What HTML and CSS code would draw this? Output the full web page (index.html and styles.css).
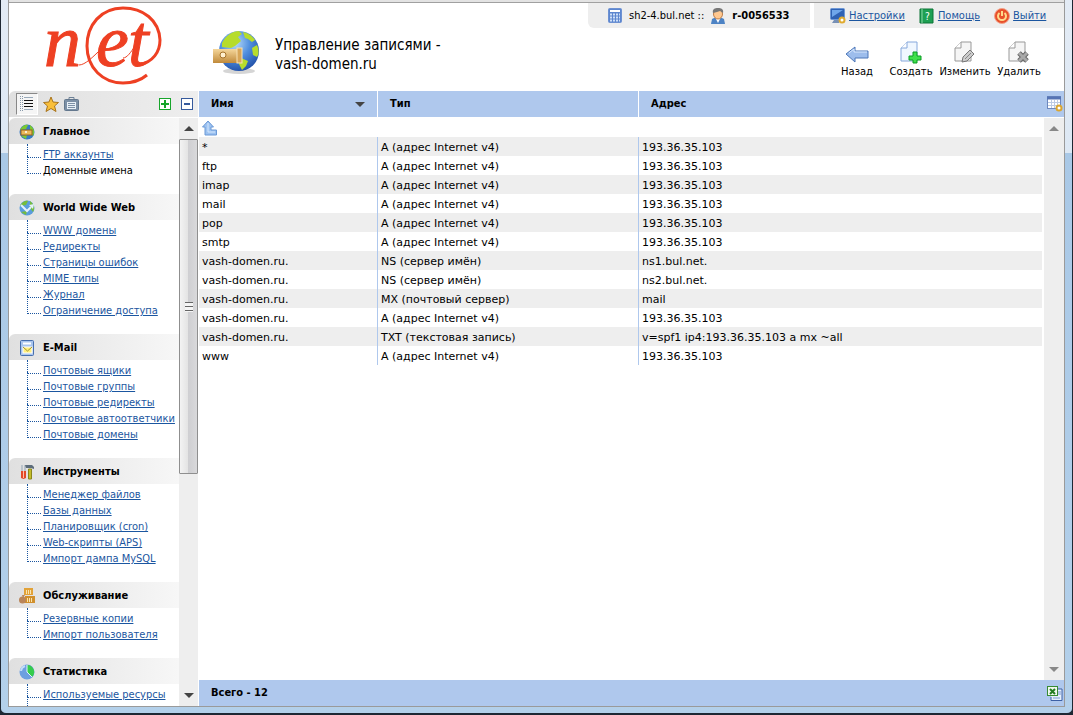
FILE: index.html
```html
<!DOCTYPE html>
<html lang="ru">
<head>
  <meta charset="UTF-8">
  <meta name="viewport" content="width=device-width, initial-scale=1.0">
  <title>Управление записями - vash-domen.ru</title>
  <link rel="stylesheet" href="styles.css">
</head>
<body>
<div class="window">
<div class="page">

  <header class="header">
    <a class="logo" href="#" aria-label="net">
      <svg width="120" height="80" viewBox="0 0 120 80">
        <text y="60" x="1 53 85">net</text>
        <path class="hair" d="M36 59C42 59 50 51 58 43M80 52C84 52 88 46 92 40"/>
        <path d="M96 59C110 56 117 46 117 34C116 14 100 2 80 2C58 2 44 19 44 40C44 62 60 77 80 77C90 77 98 74 104 69"/>
      </svg>
    </a>
    <div class="title">
      <svg width="46" height="44" viewBox="0 0 46 44">
        <defs>
          <radialGradient id="sea" cx=".4" cy=".3" r=".75"><stop offset="0" stop-color="#b9dcfb"/><stop offset=".5" stop-color="#4f8ede"/><stop offset="1" stop-color="#1f4ea6"/></radialGradient>
          <linearGradient id="wood" x2="0" y2="1"><stop offset="0" stop-color="#f5d79b"/><stop offset="1" stop-color="#c08a3a"/></linearGradient>
        </defs>
        <ellipse cx="26" cy="41" rx="16" ry="3" fill="#d5d5d5"/>
        <circle cx="26" cy="21" r="20" fill="url(#sea)"/>
        <path d="M9 13C13 5 20 1 26 1L29 4L25 7L28 11L22 16L18 18L9 17ZM30 2C36 3 40 7 42 10L39 12L35 9L32 8ZM39 18L44 15C46 20 46 24 44 27L40 25ZM28 28L35 31L33 36L29 40L26 34Z" fill="#b6dc2c"/>
        <rect x="0" y="19" width="25" height="14" fill="url(#wood)"/>
        <rect x="24" y="18" width="5" height="15" fill="#d8a658" stroke="#f8e2b4"/>
        <circle cx="10" cy="25" r="3" fill="#fff0cf" stroke="#a6732b"/>
      </svg>
      <h1>Управление записями -<br>vash-domen.ru</h1>
    </div>
    <div class="header-right">
      <div class="topbar">
        <div class="session">
          <svg width="14" height="16" viewBox="0 0 14 16"><rect x=".5" y=".5" width="13" height="14" rx="1" fill="#5c86cf" stroke="#6d91d2"/><path d="M2 3H12" stroke="#fff" stroke-width="2"/><path d="M2 6.500H12M2 9.500H12M2 12.500H12" stroke="#cfe0f8" stroke-width="2" stroke-dasharray="2 1"/></svg>
          <span>sh2-4.bul.net ::</span>
          <svg width="14" height="16" viewBox="0 0 14 16"><path d="M0 16L1 11L5 9H9L13 11L14 16Z" fill="#4d83c4"/><path d="M4 9L7 15L10 9Z" fill="#fff"/><ellipse cx="7" cy="6" rx="4.500" ry="5" fill="#ffc890" stroke="#bd7c46"/><path d="M2 5C1 1 4 0 7 0S13 1 12 5L9 3L6 4Z" fill="#777"/></svg>
          <b>r-0056533</b>
        </div>
        <nav class="links">
          <a href="#"><svg width="16" height="16" viewBox="0 0 16 16"><rect x=".5" y=".5" width="14" height="11" rx="1" fill="#2f62b4" stroke="#6d97d5"/><path d="M2 2H13L2 9Z" fill="#6fa6ea"/><path d="M4 12H9V15H2Z" fill="#7790b5"/><circle cx="12" cy="12" r="2.500" fill="#fff" stroke="#e0ab2f" stroke-width="2"/></svg><span>Настройки</span></a>
          <a href="#"><svg width="16" height="16" viewBox="0 0 16 16"><path d="M1 1H14V15H1Z" fill="#1fa053" stroke="#0d7436"/><path d="M3 1V15" stroke="#8ed9a8"/><text x="6" y="12" font-size="10" fill="#fff">?</text></svg><span>Помощь</span></a>
          <a href="#"><svg width="16" height="16" viewBox="0 0 16 16"><circle cx="8" cy="8" r="7.500" fill="#e8502b" stroke="#f2a28a"/><path d="M5.500 5A4 4 0 1 0 10.500 5M8 3V8" fill="none" stroke="#ffd98c" stroke-width="2"/></svg><span>Выйти</span></a>
        </nav>
      </div>
      <div class="actions">
        <button><svg width="24" height="24" viewBox="0 0 24 24"><path d="M1 13L10 6V10H23V17H10V21Z" fill="#9dbdec" stroke="#4c76b8"/><path d="M4 12L9 8V11H22" fill="none" stroke="#d9e8fc"/></svg>Назад</button>
        <button><svg width="24" height="24" viewBox="0 0 24 24"><path d="M8 1H18V20H2V7Z" fill="#f0f7ff" stroke="#86a8dc"/><path d="M8 1V7H2" fill="#fff" stroke="#86a8dc"/><path d="M14 11H18V15H22V19H18V22H14V19H10V15H14Z" fill="#3fe04c" stroke="#0b9c25"/></svg>Создать</button>
        <button><svg width="24" height="24" viewBox="0 0 24 24"><path d="M8 1H18V20H2V7Z" fill="#f5f5f5" stroke="#999"/><path d="M8 1V7H2" fill="#fff" stroke="#999"/><path d="M9 21L10 16L17 9L21 13L14 20Z" fill="#ccc" stroke="#777"/><path d="M12 18L18 12" stroke="#888"/></svg>Изменить</button>
        <button><svg width="24" height="24" viewBox="0 0 24 24"><path d="M8 1H18V20H2V7Z" fill="#f5f5f5" stroke="#999"/><path d="M8 1V7H2" fill="#fff" stroke="#999"/><path d="M12 12L20 20M20 12L12 20" stroke="#666" stroke-width="5"/><path d="M12 12L20 20M20 12L12 20" stroke="#a9a9a9" stroke-width="3"/></svg>Удалить</button>
      </div>
    </div>
  </header>

  <div class="main">
    <aside class="sidebar">
      <div class="tools">
        <button class="active" aria-label="Список"><svg width="16" height="16" viewBox="0 0 16 16"><path d="M1.500 0V16M3.500 0V16" stroke="#89a" stroke-dasharray="1 1"/><path d="M5 1.500H14M5 13.500H14" stroke="#9ab"/><path d="M5 4.500H14M5 7.500H14M5 10.500H14" stroke="#111"/></svg></button>
        <button aria-label="Избранное"><svg width="16" height="16" viewBox="0 0 16 16"><path d="M8 1L10 6L15.500 6.500L11.500 10L13 15.500L8 12.500L3 15.500L4.500 10L.5 6.500L6 6Z" fill="#f9bf3a" stroke="#a8741c"/></svg></button>
        <button aria-label="Инструменты"><svg width="16" height="16" viewBox="0 0 16 16"><path d="M5 4V1.500H10V4" fill="none" stroke="#6e8196"/><rect x=".5" y="3.500" width="14" height="11" rx="1" fill="#7c90a6" stroke="#64788e"/><rect x="3" y="6" width="9" height="7" fill="#e8f0f7"/><path d="M4 7.500H11M4 9.500H11M4 11.500H11" stroke="#7c90a6"/></svg></button>
        <button class="expand" aria-label="Развернуть"><svg width="12" height="12" viewBox="0 0 12 12"><rect x=".5" y=".5" width="11" height="11" fill="#fff" stroke="#17a52b"/><path d="M2 6H10M6 2V10" stroke="#17a52b" stroke-width="2"/></svg></button>
        <button aria-label="Свернуть"><svg width="12" height="12" viewBox="0 0 12 12"><rect x=".5" y=".5" width="11" height="11" fill="#fff" stroke="#365a9c"/><path d="M3 6H9" stroke="#365a9c" stroke-width="2"/></svg></button>
      </div>
      <div class="menu-wrap">
        <nav class="menu">
          <h2><svg width="16" height="16" viewBox="0 0 16 16"><circle cx="8" cy="8" r="7.500" fill="#377cc6"/><path d="M1 6C3 1 8 0 9 1L7 5ZM11 1C15 4 16 8 14 12L11 8ZM2 12L8 11L7 15Z" fill="#7bc92f"/><rect x="2" y="6" width="11" height="5" fill="#eab95b" stroke="#98641f"/><circle cx="7" cy="8" r="1" fill="#fff"/></svg>Главное</h2>
          <ul>
            <li><a href="#">FTP аккаунты</a></li>
            <li><span>Доменные имена</span></li>
          </ul>
          <h2><svg width="16" height="16" viewBox="0 0 16 16"><circle cx="8" cy="8" r="7.500" fill="#5a9ddd"/><path d="M1 6C3 1 8 0 9 1L7 5ZM11 1C15 4 16 8 14 12L11 8ZM2 12L8 11L7 15Z" fill="#76bd3b"/><path d="M2 5L8 11L12 7" fill="none" stroke="#e4f1fb" stroke-width="2"/><path d="M10 5L15 4L14 9Z" fill="#e4f1fb"/></svg>World Wide Web</h2>
          <ul>
            <li><a href="#">WWW домены</a></li>
            <li><a href="#">Редиректы</a></li>
            <li><a href="#">Страницы ошибок</a></li>
            <li><a href="#">MIME типы</a></li>
            <li><a href="#">Журнал</a></li>
            <li><a href="#">Ограничение доступа</a></li>
          </ul>
          <h2><svg width="16" height="16" viewBox="0 0 16 16"><rect x="1.500" y=".5" width="13" height="15" rx="1" fill="#a9c5ee" stroke="#476fae"/><path d="M4 3.500H12" stroke="#fff" stroke-width="2"/><rect x="4" y="7" width="9" height="6" fill="#ffef7c" stroke="#fff"/><path d="M4 7L8.500 11L13 7" fill="none" stroke="#a5942e"/></svg>E-Mail</h2>
          <ul>
            <li><a href="#">Почтовые ящики</a></li>
            <li><a href="#">Почтовые группы</a></li>
            <li><a href="#">Почтовые редиректы</a></li>
            <li><a href="#">Почтовые автоответчики</a></li>
            <li><a href="#">Почтовые домены</a></li>
          </ul>
          <h2><svg width="16" height="16" viewBox="0 0 16 16"><path d="M3 1V7M6 1V7" stroke="#93a5b5"/><path d="M2 7H7V14L4.500 15L2 14Z" fill="#e34928"/><path d="M4.500 7V14" stroke="#ffc0a8"/><path d="M6 1H13L15 3V5L12 4H7Z" fill="#5d6d7b"/><path d="M9.500 5H12.500V15H9.500Z" fill="#c4bd2a" stroke="#8b861b"/></svg>Инструменты</h2>
          <ul>
            <li><a href="#">Менеджер файлов</a></li>
            <li><a href="#">Базы данных</a></li>
            <li><a href="#">Планировщик (cron)</a></li>
            <li><a href="#">Web-скрипты (APS)</a></li>
            <li><a href="#">Импорт дампа MySQL</a></li>
          </ul>
          <h2><svg width="16" height="16" viewBox="0 0 16 16"><rect x="5" y="0" width="9" height="7" fill="#e2a238"/><rect x="6" y="8" width="10" height="7" fill="#d18f2c"/><path d="M7.500 2V6M9.500 2V6M11.500 2V6M8.500 10V14M10.500 10V14M12.500 10V14" stroke="#fbe5ae"/><circle cx="3.500" cy="12" r="3.500" fill="#b9855a"/><path d="M3 7H6L4 10Z" fill="#b9855a"/></svg>Обслуживание</h2>
          <ul>
            <li><a href="#">Резервные копии</a></li>
            <li><a href="#">Импорт пользователя</a></li>
          </ul>
          <h2><svg width="16" height="16" viewBox="0 0 16 16"><circle cx="8" cy="8" r="7.500" fill="#6c9fe0"/><path d="M8 1A7 7 0 0 1 13 13L8 8Z" fill="#35cc4d"/><path d="M8 1V8L13 13" fill="none" stroke="#e5f3ff"/><path d="M2 7A6 6 0 0 1 6 2" stroke="#c2dcf8" stroke-width="2" fill="none"/></svg>Статистика</h2>
          <ul class="continued">
            <li><a href="#">Используемые ресурсы</a></li>
          </ul>
        </nav>
        <div class="scroll">
          <button class="arrow up" aria-label="Вверх"></button>
          <div class="thumb"><i></i></div>
          <button class="arrow down" aria-label="Вниз"></button>
        </div>
      </div>
    </aside>

    <section class="content">
      <div class="list">
        <table class="records">
          <thead>
            <tr>
              <th class="col-name">Имя<i class="sort"></i></th>
              <th class="col-type">Тип</th>
              <th>Адрес</th>
            </tr>
          </thead>
          <tbody>
            <tr class="level-up"><td colspan="3"><a href="#" aria-label="На уровень вверх"><svg width="16" height="16" viewBox="0 0 16 16"><path d="M6 1L11.500 7H9V10H14.500V15H3V7H.5Z" fill="#9cc2f1" stroke="#6b99d6"/><path d="M6 3V12H13" fill="none" stroke="#d5e7fc"/></svg></a></td></tr>
            <tr><td>*</td><td>A (адрес Internet v4)</td><td>193.36.35.103</td></tr>
            <tr><td>ftp</td><td>A (адрес Internet v4)</td><td>193.36.35.103</td></tr>
            <tr><td>imap</td><td>A (адрес Internet v4)</td><td>193.36.35.103</td></tr>
            <tr><td>mail</td><td>A (адрес Internet v4)</td><td>193.36.35.103</td></tr>
            <tr><td>pop</td><td>A (адрес Internet v4)</td><td>193.36.35.103</td></tr>
            <tr><td>smtp</td><td>A (адрес Internet v4)</td><td>193.36.35.103</td></tr>
            <tr><td>vash-domen.ru.</td><td>NS (сервер имён)</td><td>ns1.bul.net.</td></tr>
            <tr><td>vash-domen.ru.</td><td>NS (сервер имён)</td><td>ns2.bul.net.</td></tr>
            <tr><td>vash-domen.ru.</td><td>MX (почтовый сервер)</td><td>mail</td></tr>
            <tr><td>vash-domen.ru.</td><td>A (адрес Internet v4)</td><td>193.36.35.103</td></tr>
            <tr><td>vash-domen.ru.</td><td>TXT (текстовая запись)</td><td>v=spf1 ip4:193.36.35.103 a mx ~all</td></tr>
            <tr><td>www</td><td>A (адрес Internet v4)</td><td>193.36.35.103</td></tr>
          </tbody>
        </table>
        <div class="rail">
          <button class="columns" aria-label="Настройка колонок"><svg width="16" height="16" viewBox="0 0 16 16"><rect x=".5" y=".5" width="13" height="12" fill="#fff" stroke="#6d88bd"/><path d="M0 2H14" stroke="#5674b4" stroke-width="3"/><path d="M4.500 4V12M7.500 4V12M10.500 4V12M1 6.500H13M1 9.500H13" stroke="#bccbe4"/><circle cx="12" cy="12" r="2.500" fill="#fff" stroke="#dba62f" stroke-width="2"/></svg></button>
          <div class="scroll inactive">
            <button class="arrow up" aria-label="Вверх"></button>
            <button class="arrow down" aria-label="Вниз"></button>
          </div>
        </div>
      </div>
      <footer class="total">
        <b>Всего - 12</b>
        <button aria-label="Экспорт в Excel"><svg width="16" height="16" viewBox="0 0 16 16"><path d="M5 4H15V15.500H4V12" fill="#e6effb" stroke="#3d60a6"/><path d="M11 7H14M11 9H14M6 13H13" stroke="#7c9bd0"/><rect x=".5" y="1.500" width="10" height="9" fill="#f1f9ee" stroke="#378b33"/><path d="M3 4L8 9M8 4L3 9" stroke="#267d22" stroke-width="2"/></svg></button>
      </footer>
    </section>
  </div>

</div>
</div>
</body>
</html>
```

FILE: styles.css
```css
* {
  box-sizing: border-box;
}
body {
  margin: 0;
  background: #1e2733;
  font: 11px/16px "DejaVu Sans Condensed", "DejaVu Sans", sans-serif;
  color: #000;
}
button {
  padding: 0;
  border: 0;
  background: none;
  font: inherit;
  color: inherit;
}
svg {
  display: block;
  flex: none;
}
h1, h2, ul {
  margin: 0;
  padding: 0;
  font-weight: normal;
}
a {
  color: #1b56a0;
}

/* window frame */
.window {
  height: 100vh;
  padding: 0 7px 6px;
  border: solid #1e2733;
  border-width: 0 1px 2px;
  border-radius: 0 0 6px 6px;
  background: linear-gradient(#e3ebf5 0, #dde8f4 153px, #a9c8e6 153px, #b3d0ea 100%);
}
.page {
  display: flex;
  flex-direction: column;
  height: 100%;
  border: solid #9a9a9a;
  border-width: 0 1px 1px;
  background: #fff;
}
.page::before {
  content: "";
  flex: none;
  height: 2px;
  background: #e3e3e3;
  border-bottom: 1px solid #a0a0a0;
}

.header {
  display: flex;
  flex: none;
  height: 88px;
}
.logo {
  width: 170px;
  margin: 3px 0 0 34px;
}
.logo text {
  font: italic 74px "Liberation Serif", serif;
  fill: #ee4023;
  stroke: #ee4023;
  stroke-width: 1;
}
.logo path {
  fill: none;
  stroke: #ee4023;
  stroke-width: 3;
}
.logo .hair {
  stroke-width: 1;
}
.title {
  display: flex;
  align-items: flex-start;
  gap: 16px;
  padding-top: 27px;
}
.title h1 {
  padding-top: 6px;
  font-size: 15px;
  line-height: 19px;
  white-space: nowrap;
}
.header-right {
  display: flex;
  flex-direction: column;
  align-items: flex-end;
  margin-left: auto;
}
.topbar {
  display: flex;
  gap: 4px;
}
.session, .links {
  display: flex;
  align-items: center;
  height: 25px;
  background: #eee;
}
.session {
  gap: 7px;
  width: 222px;
  padding-left: 20px;
  border-radius: 0 0 0 6px;
}
.links {
  gap: 14px;
  width: 250px;
  padding-left: 16px;
}
.links a {
  display: flex;
  align-items: center;
  gap: 3px;
}
.actions {
  display: flex;
  padding: 13px 18px 0 0;
}
.actions button {
  display: flex;
  flex-direction: column;
  align-items: center;
  width: 54px;
  font: 10px/14px "DejaVu Sans", sans-serif;
}

.main {
  display: flex;
  flex: 1;
  min-height: 0;
}

/* sidebar */
.sidebar {
  display: flex;
  flex-direction: column;
  width: 190px;
  padding-right: 1px;
  background: #fff;
}
.tools {
  display: flex;
  align-items: center;
  gap: 5px;
  flex: none;
  height: 26px;
  margin-bottom: 1px;
  padding: 0 5px 0 7px;
  border-radius: 6px 0 0 0;
  background: linear-gradient(90deg, #e0e0e0, #eee);
}
.tools .active {
  padding: 2px;
  border: 1px solid;
  border-color: #888 #fff #fff #888;
  background: #f5f5f5;
}
.tools .expand {
  margin-left: auto;
  margin-right: 5px;
}
.menu-wrap {
  display: flex;
  flex: 1;
  min-height: 0;
}
.menu {
  flex: 1;
  overflow: hidden;
}
.menu h2 {
  display: flex;
  align-items: center;
  gap: 8px;
  height: 26px;
  padding: 1px 0 0 10px;
  border-radius: 6px 0 0 0;
  background: linear-gradient(90deg, #e0e0e0, #f7f7f7);
  font-size: 11px;
  font-weight: bold;
}
.menu ul {
  list-style: none;
  margin: 2px 0 16px 18px;
}
.menu li {
  position: relative;
  height: 16px;
  padding-left: 16px;
  line-height: 18px;
  white-space: nowrap;
}
.menu li::before {
  content: "";
  position: absolute;
  left: 0;
  top: -6px;
  width: 13px;
  height: 17px;
  border: dotted #1b56a0;
  border-width: 0 0 1px 1px;
}
.menu li:first-child::before {
  top: -2px;
  height: 13px;
}
.menu .continued::after {
  content: "";
  display: block;
  height: 16px;
  margin-top: -6px;
  border-left: 1px dotted #1b56a0;
}

/* scrollbars */
.scroll {
  display: flex;
  flex-direction: column;
  width: 19px;
  background: #eee;
}
.arrow {
  height: 21px;
  flex: none;
}
.arrow::before {
  content: "";
  display: block;
  width: 0;
  margin: 0 auto;
  border: 5px solid transparent;
  border-top-width: 0;
  border-bottom-color: #444;
}
.arrow.down {
  margin-top: auto;
}
.arrow.down::before {
  border-width: 5px 5px 0;
  border-top-color: #444;
}
.inactive .arrow::before {
  border-top-color: #888;
  border-bottom-color: #888;
}
.thumb {
  display: flex;
  align-items: center;
  justify-content: center;
  height: 57%;
  border: 1px solid #8f8f8f;
  border-radius: 1px;
  background: linear-gradient(90deg, #f3f3f3, #e4e4e4 45%, #cfcfd2 50%, #d9d9db);
}
.thumb i {
  width: 8px;
  height: 10px;
  background: repeating-linear-gradient(#666 0, #666 1px, #f5f5f5 1px, #f5f5f5 4px);
}

/* records */
.content {
  display: flex;
  flex-direction: column;
  flex: 1;
  font: 11px/17px "DejaVu Sans", sans-serif;
}
.list {
  display: flex;
  align-items: stretch;
  flex: 1;
}
.records {
  flex: 1;
  align-self: flex-start;
  table-layout: fixed;
  border-collapse: separate;
  border-spacing: 0;
}
.records th {
  height: 26px;
  padding: 0 12px;
  border-right: 1px solid #fff;
  background: #afc8ed;
  font: bold 11px/16px "DejaVu Sans Condensed", sans-serif;
  text-align: left;
}
.records th:last-child {
  border-right: 0;
}
.col-name {
  width: 179px;
}
.col-type {
  width: 261px;
}
.sort {
  float: right;
  margin-top: 6px;
  border: 5px solid transparent;
  border-top-color: #444;
  border-bottom: 0;
}
.records td {
  height: 19px;
  padding: 2px 3px 0;
  border-right: 1px solid #afc8ed;
}
.records td:last-child {
  border-right: 0;
}
.records tbody tr:nth-child(even) {
  background: #eee;
}
.records .level-up td {
  height: 20px;
}
.rail {
  display: flex;
  flex-direction: column;
  width: 22px;
}
.columns {
  height: 26px;
  padding-left: 5px;
  background: #afc8ed;
}
.rail .scroll {
  flex: 1;
  align-self: flex-end;
  width: 20px;
  margin-top: 1px;
}
.total {
  display: flex;
  align-items: center;
  justify-content: space-between;
  height: 26px;
  padding: 0 1px 0 12px;
  background: #afc8ed;
}
.total b {
  font: bold 11px/16px "DejaVu Sans Condensed", sans-serif;
}
```
